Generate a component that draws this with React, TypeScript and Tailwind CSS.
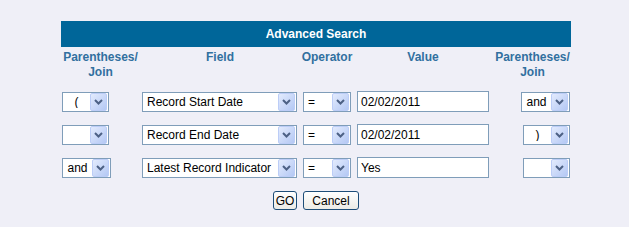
import React from "react";

function Arrow() {
  return (
    <div className="ml-auto mr-px flex h-[18px] w-[17px] shrink-0 items-center justify-center rounded-[2px] border border-[#bccdf7] bg-gradient-to-br from-[#e3ebfd] to-[#b4c8f4]">
      <svg width="9" height="6" viewBox="0 0 9 6">
        <path d="M1 1 L4.5 4.5 L8 1" fill="none" stroke="#4d6185" strokeWidth="2" />
      </svg>
    </div>
  );
}

function Sel({ w, text, center }: { w: string; text: string; center?: boolean }) {
  return (
    <div className={`flex h-[20px] items-center border border-[#7f9db9] bg-white ${w}`}>
      <span
        className={`flex-1 truncate text-[12px] leading-none text-black ${center ? "text-center" : "pl-[4px]"}`}
      >
        {text}
      </span>
      <Arrow />
    </div>
  );
}

function Input({ value }: { value: string }) {
  return (
    <div className="flex h-[21px] w-[132px] items-center border border-[#7f9db9] bg-white pl-[3px] text-[12px] text-black">
      {value}
    </div>
  );
}

const rows = [
  { l: "(", lw: "w-[47px]", f: "Record Start Date", v: "02/02/2011", r: "and", rw: "w-[49px]" },
  { l: "", lw: "w-[47px]", f: "Record End Date", v: "02/02/2011", r: ")", rw: "w-[47px]" },
  { l: "and", lw: "w-[49px]", f: "Latest Record Indicator", v: "Yes", r: "", rw: "w-[47px]" },
];

export default function App() {
  return (
    <div
      className="h-[227px] w-[629px] bg-[#efeff7] pt-[21px]"
      style={{ fontFamily: '"Liberation Sans", Arial, sans-serif' }}
    >
      <div className="ml-[61px] w-[510px]">
        <div className="flex h-[26px] items-center justify-center bg-[#006699] text-[12px] font-bold text-white">
          Advanced Search
        </div>
        <div className="grid grid-cols-[79px_160px_54px_138px_79px] pt-[3px] text-center text-[12px] font-bold leading-[15px] text-[#31709f]">
          <div>
            Parentheses/
            <br />
            Join
          </div>
          <div>Field</div>
          <div>Operator</div>
          <div>Value</div>
          <div className="pl-[2px]">
            Parentheses/
            <br />
            Join
          </div>
        </div>
        <div className="mt-[12px] flex flex-col gap-[13px]">
          {rows.map((r, i) => (
            <div key={i} className="grid h-[20px] grid-cols-[79px_160px_54px_138px_79px] items-center">
              <div className="pl-px">
                <Sel w={r.lw} text={r.l} center />
              </div>
              <div className="pl-[2px]">
                <Sel w="w-[155px]" text={r.f} />
              </div>
              <div className="pl-[3px]">
                <Sel w="w-[48px]" text="=" />
              </div>
              <div className="-mt-px pl-[3px]">
                <Input value={r.v} />
              </div>
              <div className="flex justify-end pr-px">
                <Sel w={r.rw} text={r.r} center />
              </div>
            </div>
          ))}
        </div>
        <div className="mt-[13px] flex justify-center gap-[6px]">
          <button className="h-[19px] w-[24px] rounded-[3px] border border-[#1d4d78] bg-gradient-to-b from-white to-[#ecebe6] text-[12px] leading-none text-black">
            GO
          </button>
          <button className="h-[19px] w-[56px] rounded-[3px] border border-[#1d4d78] bg-gradient-to-b from-white to-[#ecebe6] text-[12px] leading-none text-black">
            Cancel
          </button>
        </div>
      </div>
    </div>
  );
}
